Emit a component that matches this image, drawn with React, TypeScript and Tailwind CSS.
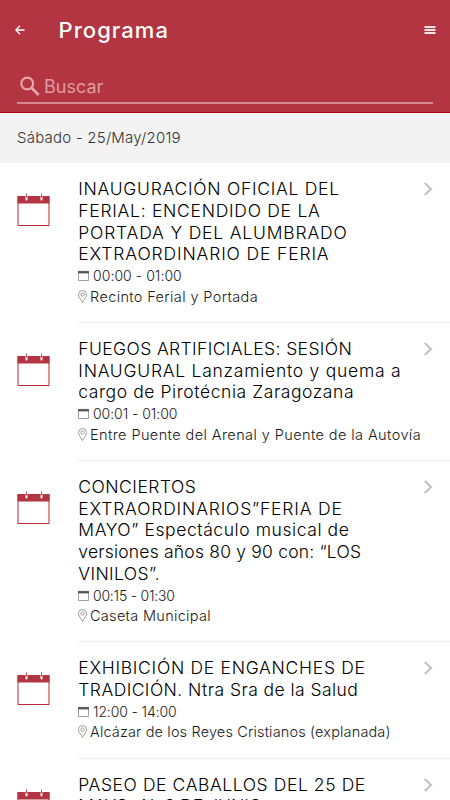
import { clsx } from "clsx";

type Line = { text: string; tracking: string };

type EventItem = {
  title: Line[];
  time: Line;
  place: Line;
};

const EVENTS: EventItem[] = [
  {
    title: [
      { text: "INAUGURACIÓN OFICIAL DEL", tracking: "tracking-[0.72px]" },
      { text: "FERIAL: ENCENDIDO DE LA", tracking: "tracking-[0.72px]" },
      { text: "PORTADA Y DEL ALUMBRADO", tracking: "tracking-[0.82px]" },
      { text: "EXTRAORDINARIO DE FERIA", tracking: "tracking-[0.86px]" },
    ],
    time: { text: "00:00 - 01:00", tracking: "tracking-[0.05px]" },
    place: { text: "Recinto Ferial y Portada", tracking: "tracking-[0.37px]" },
  },
  {
    title: [
      { text: "FUEGOS ARTIFICIALES: SESIÓN", tracking: "tracking-[0.39px]" },
      { text: "INAUGURAL Lanzamiento y quema a", tracking: "tracking-[0.75px]" },
      { text: "cargo de Pirotécnia Zaragozana", tracking: "tracking-[0.58px]" },
    ],
    time: { text: "00:01 - 01:00", tracking: "tracking-[-0.05px]" },
    place: {
      text: "Entre Puente del Arenal y Puente de la Autovía",
      tracking: "tracking-[0.41px]",
    },
  },
  {
    title: [
      { text: "CONCIERTOS", tracking: "tracking-[0.5px]" },
      { text: "EXTRAORDINARIOS”FERIA DE", tracking: "tracking-[0.82px]" },
      { text: "MAYO” Espectáculo musical de", tracking: "tracking-[0.58px]" },
      { text: "versiones años 80 y 90 con: “LOS", tracking: "tracking-[0.2px]" },
      { text: "VINILOS”.", tracking: "tracking-[0.38px]" },
    ],
    time: { text: "00:15 - 01:30", tracking: "tracking-[-0.22px]" },
    place: { text: "Caseta Municipal", tracking: "tracking-[0.3px]" },
  },
  {
    title: [
      { text: "EXHIBICIÓN DE ENGANCHES DE", tracking: "tracking-[0.72px]" },
      { text: "TRADICIÓN. Ntra Sra de la Salud", tracking: "tracking-[0.44px]" },
    ],
    time: { text: "12:00 - 14:00", tracking: "tracking-[-0.12px]" },
    place: {
      text: "Alcázar de los Reyes Cristianos (explanada)",
      tracking: "tracking-[0.15px]",
    },
  },
  {
    title: [
      { text: "PASEO DE CABALLOS DEL 25 DE", tracking: "tracking-[0.58px]" },
      { text: "MAYO. AL 2 DE JUNIO", tracking: "tracking-[0px]" },
    ],
    time: { text: "12:00 - 20:00", tracking: "tracking-[-0.2px]" },
    place: { text: "Recinto Ferial", tracking: "tracking-[0.3px]" },
  },
];

function BackIcon() {
  return (
    <svg width="10" height="10" viewBox="0 0 10 10" fill="none" stroke="#fff" strokeWidth="1.3">
      <path d="M9.6 5H1M5 .8 .9 5 5 9.2" />
    </svg>
  );
}

function MenuIcon() {
  return (
    <svg width="12" height="10" viewBox="0 0 12 10" fill="#f6e4e6">
      <path d="M.5 1h11v2H.5zM.5 4h11v2H.5zM.5 7h11v2H.5z" />
    </svg>
  );
}

function SearchIcon() {
  return (
    <svg width="20" height="20" viewBox="0 0 20 20" fill="none" stroke="#e6a5ac">
      <circle cx="7.2" cy="7.5" r="5.9" strokeWidth="2.1" />
      <path d="M11.5 11.8 18.6 18.9" strokeWidth="2.8" />
    </svg>
  );
}

function CalendarIcon() {
  return (
    <svg width="33" height="33" viewBox="0 0 33 33">
      <path d="M1 3.5h31v29H1z" fill="#fff" stroke="#bb2634" />
      <path d="M.5 3h32v7.5H.5z" fill="#b23541" />
      <path d="M9.5 4v2.5M24.5 4v2.5" stroke="#fff" strokeWidth="2" strokeLinecap="round" />
      <path d="M9.5 .5v4M24.5 .5v4" stroke="#c24854" strokeWidth="1" />
    </svg>
  );
}

function SmallCalendarIcon() {
  return (
    <svg width="11" height="11" viewBox="0 0 11 11">
      <path d="M.5 1.5h10v9H.5z" fill="#fff" stroke="#888" strokeWidth=".8" />
      <path d="M.1 1h10.8v2.4H.1z" fill="#555" />
      <path d="M3 .3v1.4M8 .3v1.4" stroke="#aaa" strokeWidth=".8" />
    </svg>
  );
}

function PinIcon() {
  return (
    <svg width="9" height="13" viewBox="0 0 9 13" fill="none" stroke="#777" strokeWidth=".7">
      <path d="M4.5 12.5C3.8 10.2 .5 7.6 .5 4.5a4 4 0 0 1 8 0C8.5 7.6 5.2 10.2 4.5 12.5z" />
      <circle cx="4.5" cy="4.5" r="1.7" />
    </svg>
  );
}

function ChevronIcon() {
  return (
    <svg width="10" height="14" viewBox="0 0 10 14" fill="none" stroke="#c5c5c9" strokeWidth="2.4">
      <path d="M1.8 1 7.9 7 1.8 13" />
    </svg>
  );
}

function TextLine({ line }: { line: Line }) {
  return <span className={clsx("block whitespace-nowrap", line.tracking)}>{line.text}</span>;
}

function EventRow({ event }: { event: EventItem }) {
  return (
    <li className="flex pl-[17px]">
      <div className="w-[61px] shrink-0 pt-[30px]">
        <CalendarIcon />
      </div>
      <div className="flex min-w-0 flex-1 border-b border-[#ececec] pt-[15px] pb-[14.8px]">
        <div className="min-w-0 flex-1">
          <h2 className="pl-[0.3px] text-[17.5px] leading-[21.75px] font-light text-black">
            {event.title.map((line) => (
              <TextLine key={line.text} line={line} />
            ))}
          </h2>
          <div className="flex h-[21px] items-center gap-[4px] text-[14px] leading-[21px] font-light text-[#1a1a1a]">
            <SmallCalendarIcon />
            <TextLine line={event.time} />
          </div>
          <div className="flex h-[21px] items-center gap-[3px] pb-px text-[14.5px] leading-[21px] font-light text-[#1a1a1a]">
            <PinIcon />
            <TextLine line={event.place} />
          </div>
        </div>
        <div className="w-[27px] shrink-0 pt-[4px]">
          <ChevronIcon />
        </div>
      </div>
    </li>
  );
}

export default function App() {
  return (
    <div className="flex h-[800px] w-[450px] flex-col overflow-hidden bg-white font-['Inter',sans-serif]">
      <header className="flex h-[113px] shrink-0 flex-col border-b border-[#b0000f] bg-[#b23541]">
        <div className="flex h-[60px] items-center pr-[14px] pl-[15px]">
          <button aria-label="Volver">
            <BackIcon />
          </button>
          <h1 className="flex-1 pl-[33.5px] text-[22px] font-medium tracking-[1.05px] text-white">
            Programa
          </h1>
          <button aria-label="Menú">
            <MenuIcon />
          </button>
        </div>
        <div className="mt-[10px] mr-[17px] ml-[17px] flex h-[34px] items-center gap-[4px] border-b-2 border-[#d48891] pl-[3px]">
          <SearchIcon />
          <span className="text-[18px] text-[#e09aa2]">Buscar</span>
        </div>
      </header>
      <div className="flex h-[50px] shrink-0 items-center bg-[#f3f3f3] pl-[17px] text-[15px] leading-[20px] font-light tracking-[0.23px] text-[#333]">
        <span className="pb-px">Sábado - 25/May/2019</span>
      </div>
      <ul className="flex flex-col">
        {EVENTS.map((event) => (
          <EventRow key={event.title[0].text} event={event} />
        ))}
      </ul>
    </div>
  );
}
